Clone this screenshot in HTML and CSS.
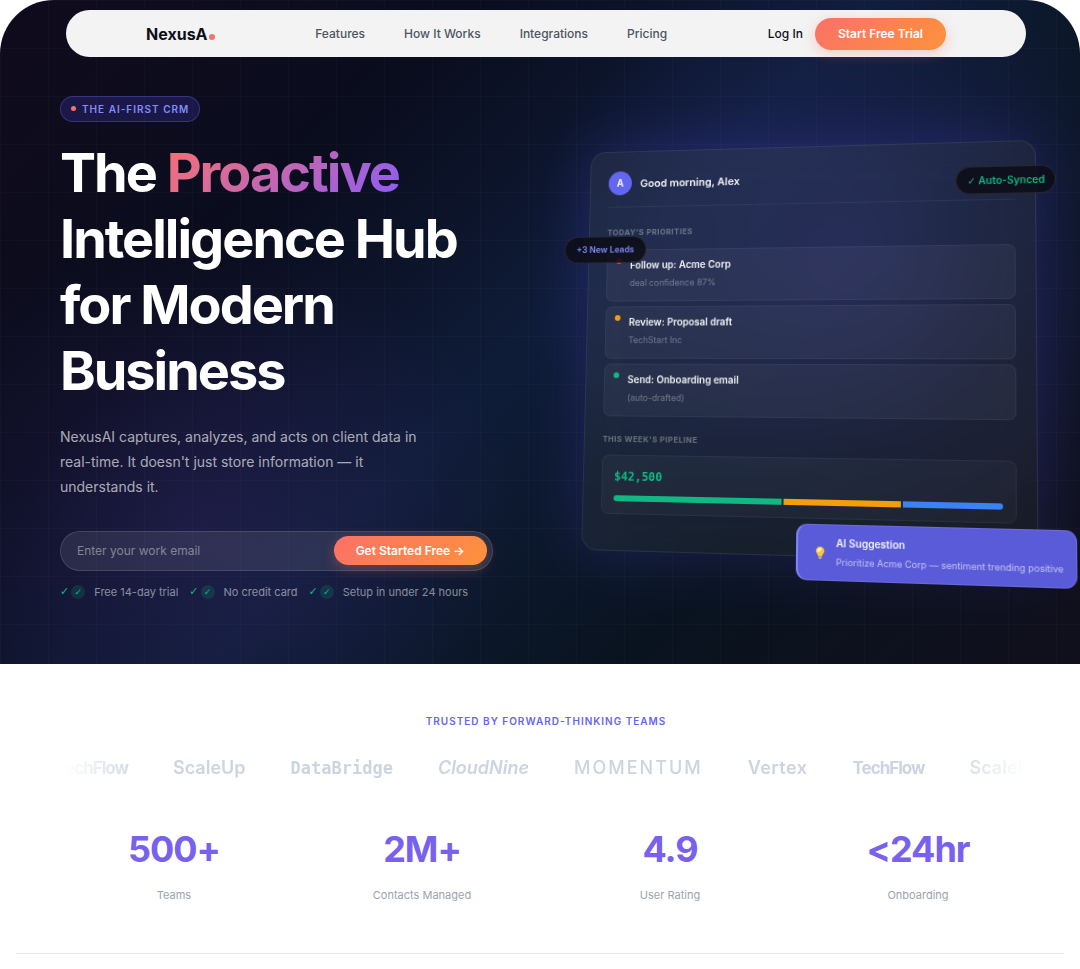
FILE: index.html
```html
<!DOCTYPE html>
<html lang="en">
<head>
    <meta charset="UTF-8">
    <meta name="viewport" content="width=device-width, initial-scale=1.0">
    <title>NexusAI</title>
    <link rel="stylesheet" href="styles.css">
</head>
<body>
    <div class="hero">
        <header class="navbar">
            <a href="#" class="logo">NexusA<span class="logo-dot"></span></a>
            <nav class="nav-links">
                <a href="#features">Features</a>
                <a href="#how">How It Works</a>
                <a href="#integrations">Integrations</a>
                <a href="#pricing">Pricing</a>
            </nav>
            <div class="nav-actions">
                <a href="#login" class="login">Log In</a>
                <button type="button" class="btn btn-nav">Start Free Trial</button>
            </div>
        </header>

        <section class="hero-inner">
            <div class="hero-text">
                <span class="badge"><span class="badge-dot"></span>THE AI-FIRST CRM</span>
                <h1>The <span class="gradient-text">Proactive</span> Intelligence Hub for&nbsp;Modern Business</h1>
                <p class="lead">NexusAI captures, analyzes, and acts on client data in real-time. It doesn't just store information — it understands it.</p>
                <form class="signup">
                    <input type="email" id="email" placeholder="Enter your work email" aria-label="Work email">
                    <button type="submit" class="btn btn-signup">Get Started Free →</button>
                </form>
                <ul class="perks">
                    <li><span class="tick">✓</span><span class="tick-circle">✓</span>Free 14-day trial</li>
                    <li><span class="tick">✓</span><span class="tick-circle">✓</span>No credit card</li>
                    <li><span class="tick">✓</span><span class="tick-circle">✓</span>Setup in under 24 hours</li>
                </ul>
            </div>

            <div class="dashboard">
                <div class="dash-header">
                    <span class="avatar">A</span>
                    <span class="greeting">Good morning, Alex</span>
                </div>
                <h2 class="dash-label">TODAY'S PRIORITIES</h2>
                <ul class="tasks">
                    <li class="task">
                        <span class="dot red"></span>
                        <div><h3>Follow up: Acme Corp</h3><p>deal confidence 87%</p></div>
                    </li>
                    <li class="task">
                        <span class="dot amber"></span>
                        <div><h3>Review: Proposal draft</h3><p>TechStart Inc</p></div>
                    </li>
                    <li class="task">
                        <span class="dot green"></span>
                        <div><h3>Send: Onboarding email</h3><p>(auto-drafted)</p></div>
                    </li>
                </ul>
                <h2 class="dash-label">THIS WEEK'S PIPELINE</h2>
                <div class="pipeline">
                    <span class="amount">$42,500</span>
                    <div class="bar">
                        <span class="green" style="width: 45%"></span>
                        <span class="amber" style="width: 30%"></span>
                        <span class="blue" style="width: 25%"></span>
                    </div>
                </div>

                <!-- floating chips -->
                <div class="chip chip-synced"><span class="tick">✓</span> Auto-Synced</div>
                <div class="chip chip-leads">+3 New Leads</div>
                <div class="suggestion">
                    <svg class="bulb" width="12" height="14" viewBox="0 0 12 14">
                        <path d="M6 1C3.500 1 1.800 2.800 1.800 5c0 1.700 1.100 2.700 1.700 3.700.4.600.5 1.300.5 1.300h4s.1-.7.5-1.300c.6-1 1.700-2 1.700-3.700C10.200 2.800 8.500 1 6 1z" fill="#fbc53d"/>
                        <path d="M6 2C4.200 2 3 3.300 3 4.900c0 .8.500 1.300 1 1.300 1.200 0 3.600-1.600 3.600-3C7.600 2.400 6.900 2 6 2z" fill="#fff1b8"/>
                        <path d="M4.300 10h3.400v2L7 13H5l-.7-1z" fill="#b9a58c"/>
                    </svg>
                    <div><h3>AI Suggestion</h3><p>Prioritize Acme Corp — sentiment trending positive</p></div>
                </div>
            </div>
        </section>
    </div>

    <section class="trusted">
        <h2 class="trusted-title">TRUSTED BY FORWARD-THINKING TEAMS</h2>
        <div class="marquee">
            <div class="track">
                <span class="brand tight">TechFlow</span>
                <span class="brand">ScaleUp</span>
                <span class="brand mono">DataBridge</span>
                <span class="brand italic">CloudNine</span>
                <span class="brand wide">MOMENTUM</span>
                <span class="brand roomy">Vertex</span>
                <span class="brand tight">TechFlow</span>
                <span class="brand">ScaleUp</span>
            </div>
        </div>
        <div class="stats">
            <div class="stat"><strong>500+</strong><span>Teams</span></div>
            <div class="stat"><strong>2M+</strong><span>Contacts Managed</span></div>
            <div class="stat"><strong>4.9</strong><span>User Rating</span></div>
            <div class="stat"><strong>&lt;24hr</strong><span>Onboarding</span></div>
        </div>
    </section>
    <hr class="divider">
</body>
</html>
```
FILE: styles.css
```css
* {
    box-sizing: border-box;
    margin: 0;
    padding: 0;
}
body {
    font-family: Inter, "Liberation Sans", sans-serif;
    background: #fff;
    color: #0f0f1a;
    overflow-x: hidden;
}
a {
    color: inherit;
    text-decoration: none;
}
ul {
    list-style: none;
}

/* hero */
.hero {
    padding: 10px 0 64px;
    border-radius: 54px 54px 0 0;
    overflow: hidden;
    background:
        linear-gradient(rgba(255, 255, 255, 0.02) 1px, transparent 1px) 0 0 / 48px 48px,
        linear-gradient(90deg, rgba(255, 255, 255, 0.02) 1px, transparent 1px) 0 0 / 48px 48px,
        radial-gradient(ellipse 30% 46% at 79% 40%, rgba(72, 66, 190, 0.26), transparent),
        radial-gradient(ellipse 30% 42% at 18% 78%, rgba(70, 44, 130, 0.28), transparent),
        linear-gradient(135deg, #100b1c 0%, #0a0d1e 28%, #0f1c38 50%, #09131f 74%, #110f1c 100%);
}
.navbar {
    display: flex;
    justify-content: space-between;
    align-items: center;
    height: 47px;
    margin: 0 54px 0 66px;
    padding: 0 80px;
    border-radius: 24px;
    background: #f3f3f3;
}
.logo {
    font-size: 16px;
    font-weight: 700;
}
.logo-dot {
    display: inline-block;
    width: 6px;
    height: 6px;
    margin-left: 1px;
    border-radius: 50%;
    background: #f87171;
}
.nav-links {
    display: flex;
    gap: 39px;
    font-size: 12px;
    font-weight: 500;
    color: #4b5563;
}
.nav-actions {
    display: flex;
    align-items: center;
    gap: 12px;
}
.login {
    font-size: 12px;
    font-weight: 500;
}
.btn {
    border: none;
    border-radius: 16px;
    background: linear-gradient(135deg, #fb7167, #fd923c);
    box-shadow: 0 4px 14px rgba(251, 113, 103, 0.3);
    color: #fff;
    font-family: inherit;
    font-size: 12px;
    font-weight: 600;
    cursor: pointer;
}
.btn-nav {
    height: 32px;
    padding: 0 23px;
}
.hero-inner {
    display: grid;
    grid-template-columns: 19fr 20fr;
    gap: 84px;
    padding: 38px 48px 0 60px;
}
.badge {
    display: inline-flex;
    align-items: center;
    gap: 6px;
    height: 26px;
    padding: 0 10px;
    border: 1px solid rgba(99, 102, 241, 0.35);
    border-radius: 13px;
    background: rgba(79, 70, 229, 0.22);
    color: #818cf8;
    font-size: 10px;
    font-weight: 600;
    letter-spacing: 1px;
}
.badge-dot {
    width: 5px;
    height: 5px;
    border-radius: 50%;
    background: #f87171;
}
h1 {
    margin-top: 18px;
    color: #fff;
    font-size: 54px;
    font-weight: 700;
    line-height: 66px;
    letter-spacing: -2px;
}
.gradient-text {
    background: linear-gradient(135deg, #f87171, #8b5cf6);
    -webkit-background-clip: text;
    background-clip: text;
    color: transparent;
}
.lead {
    max-width: 380px;
    margin-top: 20px;
    color: rgba(255, 255, 255, 0.65);
    font-size: 14px;
    line-height: 25px;
}
.signup {
    display: flex;
    align-items: center;
    height: 40px;
    margin-top: 32px;
    padding: 0 5px 0 16px;
    border: 1px solid rgba(255, 255, 255, 0.12);
    border-radius: 20px;
    background: rgba(255, 255, 255, 0.09);
}
.signup input {
    flex: 1;
    min-width: 0;
    border: none;
    outline: none;
    background: none;
    color: #fff;
    font-family: inherit;
    font-size: 12px;
}
.signup input::placeholder {
    color: rgba(255, 255, 255, 0.42);
}
.btn-signup {
    height: 29px;
    padding: 0 22px;
}
.perks {
    display: flex;
    gap: 11px;
    margin-top: 13px;
    color: rgba(255, 255, 255, 0.5);
    font-size: 11px;
    line-height: 16px;
    white-space: nowrap;
}
.perks li {
    display: flex;
    align-items: center;
}
.tick {
    color: #10b981;
    font-family: "DejaVu Sans", sans-serif;
    font-weight: 700;
}
.tick-circle {
    width: 14px;
    height: 14px;
    margin: 0 9px 0 2px;
    border-radius: 50%;
    background: rgba(16, 185, 129, 0.16);
    color: #10b981;
    font-family: "DejaVu Sans", sans-serif;
    font-size: 9px;
    line-height: 14px;
    text-align: center;
}

/* dashboard card */
.dashboard {
    position: relative;
    align-self: start;
    margin-top: 48px;
    padding: 20px 19px 36px;
    border: 1px solid rgba(255, 255, 255, 0.08);
    border-radius: 16px;
    background: linear-gradient(135deg, rgba(255, 255, 255, 0.06), rgba(255, 255, 255, 0.04));
    box-shadow: 0 0 60px rgba(79, 70, 229, 0.25);
    backdrop-filter: blur(16px);
    transform: perspective(1000px) rotateY(-8deg) rotateX(4deg);
    color: #f3f4f6;
}
.dash-header {
    display: flex;
    align-items: center;
    gap: 9px;
    padding-bottom: 12px;
    border-bottom: 1px solid rgba(255, 255, 255, 0.06);
}
.avatar {
    width: 25px;
    height: 25px;
    border-radius: 50%;
    background: #6366f1;
    font-size: 10px;
    font-weight: 700;
    line-height: 25px;
    text-align: center;
}
.greeting {
    font-size: 11px;
    font-weight: 600;
}
.dash-label {
    margin-top: 20px;
    color: rgba(255, 255, 255, 0.34);
    font-size: 8px;
    font-weight: 700;
    line-height: 12px;
    letter-spacing: 0.5px;
}
.tasks {
    display: grid;
    gap: 5px;
    margin-top: 12px;
}
.task {
    display: flex;
    gap: 9px;
    padding: 8px 9px 11px;
    border: 1px solid rgba(255, 255, 255, 0.05);
    border-radius: 7px;
    background: rgba(255, 255, 255, 0.045);
}
.dot {
    width: 6px;
    height: 6px;
    border-radius: 50%;
}
.task h3, .suggestion h3 {
    font-size: 10px;
    font-weight: 600;
    line-height: 14px;
}
.task p, .suggestion p {
    margin-top: 5px;
    color: rgba(255, 255, 255, 0.34);
    font-size: 9px;
    line-height: 14px;
}
.red {
    background: #ef4444;
}
.amber {
    background: #f59e0b;
}
.green {
    background: #10b981;
}
.blue {
    background: #3b82f6;
}
.tasks + .dash-label {
    margin-top: 17px;
}
.pipeline {
    margin-top: 10px;
    padding: 12px;
    border: 1px solid rgba(255, 255, 255, 0.05);
    border-radius: 8px;
    background: rgba(255, 255, 255, 0.03);
}
.amount {
    display: block;
    color: #10b981;
    font-family: "DejaVu Sans Mono", monospace;
    font-size: 12px;
    font-weight: 700;
    line-height: 18px;
}
.bar {
    display: flex;
    gap: 2px;
    height: 6px;
    margin-top: 10px;
    border-radius: 3px;
    overflow: hidden;
}
.chip {
    position: absolute;
    height: 28px;
    padding: 0 10px;
    border: 1px solid rgba(255, 255, 255, 0.1);
    border-radius: 14px;
    background: rgba(12, 12, 24, 0.88);
    font-size: 9px;
    font-weight: 600;
    line-height: 26px;
    white-space: nowrap;
}
.chip-synced {
    top: 24px;
    right: -20px;
    color: #10b981;
    font-size: 10px;
}
.chip-leads {
    top: 88px;
    left: -27px;
    padding: 0 12px;
    color: #818cf8;
}
.suggestion {
    position: absolute;
    right: -37px;
    bottom: -24px;
    display: flex;
    align-items: center;
    gap: 10px;
    padding: 10px 12px 10px 16px;
    border: 1px solid rgba(255, 255, 255, 0.1);
    border-left: 2px solid #8285f5;
    border-radius: 11px;
    background: #5a5bd8;
    white-space: nowrap;
}
.suggestion p {
    color: rgba(255, 255, 255, 0.62);
}

/* trusted by */
.trusted {
    margin: 0 54px 0 66px;
    padding-top: 50px;
}
.trusted-title {
    color: #6366f1;
    font-size: 10px;
    font-weight: 600;
    line-height: 14px;
    letter-spacing: 1px;
    text-align: center;
}
.marquee {
    margin-top: 28px;
    overflow: hidden;
    -webkit-mask-image: linear-gradient(90deg, transparent, #000 8%, #000 92%, transparent);
    mask-image: linear-gradient(90deg, transparent, #000 8%, #000 92%, transparent);
}
.track {
    display: flex;
    gap: 45px;
    width: max-content;
    transform: translateX(-10px);
}
.brand {
    color: #cbd5e1;
    font-size: 18px;
    font-weight: 600;
    line-height: 24px;
}
.tight {
    font-size: 17px;
    font-weight: 700;
    letter-spacing: -1px;
}
.mono {
    font-family: "DejaVu Sans Mono", monospace;
    font-size: 17px;
}
.italic {
    font-style: italic;
}
.wide {
    font-weight: 500;
    letter-spacing: 2px;
}
.roomy {
    letter-spacing: 0.5px;
}
.stats {
    display: grid;
    grid-template-columns: repeat(4, 1fr);
    gap: 32px;
    margin-top: 44px;
    text-align: center;
}
.stat strong {
    display: block;
    color: #7761ee;
    font-size: 36px;
    font-weight: 700;
    line-height: 50px;
    letter-spacing: -1px;
}
.stat span {
    display: block;
    margin-top: 12px;
    color: #9ca3af;
    font-size: 11px;
    line-height: 18px;
}
.divider {
    margin: 49px 16px 0;
    border: none;
    border-top: 1px solid #e8eaee;
}

@media (max-width: 860px) {
    .hero-inner {
        grid-template-columns: 1fr;
        gap: 24px;
    }
    .nav-links {
        display: none;
    }
    .stats {
        grid-template-columns: repeat(2, 1fr);
    }
}
```
